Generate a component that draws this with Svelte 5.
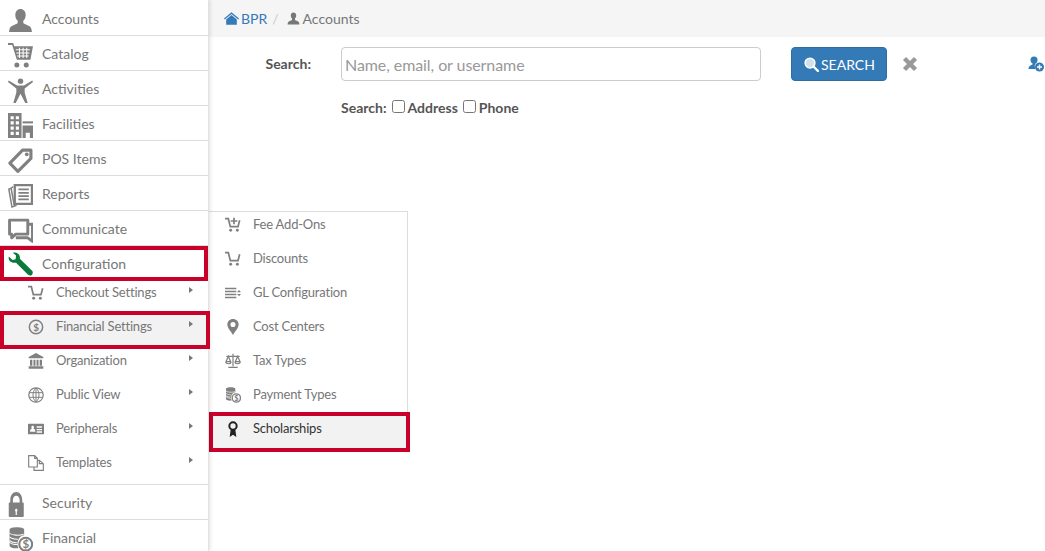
<script lang="ts">
    const mainTop = [
        { label: "Accounts", icon: "person" },
        { label: "Catalog", icon: "cart" },
        { label: "Activities", icon: "activity" },
        { label: "Facilities", icon: "building" },
        { label: "POS Items", icon: "tag" },
        { label: "Reports", icon: "reports" },
        { label: "Communicate", icon: "chat" },
    ];
    const subItems = [
        { label: "Checkout Settings", icon: "cartline" },
        { label: "Financial Settings", icon: "dollar", marked: true },
        { label: "Organization", icon: "bank" },
        { label: "Public View", icon: "globe" },
        { label: "Peripherals", icon: "idcard" },
        { label: "Templates", icon: "files" },
    ];
    const flyout = [
        { label: "Fee Add-Ons", icon: "cartplus" },
        { label: "Discounts", icon: "cartline" },
        { label: "GL Configuration", icon: "list" },
        { label: "Cost Centers", icon: "pin" },
        { label: "Tax Types", icon: "scale" },
        { label: "Payment Types", icon: "coins" },
        { label: "Scholarships", icon: "ribbon", marked: true },
    ];
</script>

{#snippet icon(name)}
    <svg viewBox="0 0 24 24" class="ico" aria-hidden="true">
        {#if name === "person"}
            <path d="M12 1c3 0 5 2.400 5 5.600 0 2.400-1 4.400-2.300 5.600v2c0 1 3.500 2 6 3.400 1.300.8 2 2.600 2.300 5.400H1c.3-2.800 1-4.600 2.300-5.400 2.500-1.400 6-2.400 6-3.400v-2C8 11 7 9 7 6.600 7 3.400 9 1 12 1z" />
        {:else if name === "cart"}
            <path d="M0 0h5l1 3h18l-2.500 13H8.500L4 2H0z" />
            <path class="cut" d="M7.500 6.500h13.500M8 9.500h12.500M8.800 12.500h11M11 4.500v10M14.500 4.500v10M18 4.500v10" />
            <circle cx="8.500" cy="21" r="2.400" /><circle cx="17.500" cy="21" r="2.400" />
        {:else if name === "activity"}
            <circle cx="12" cy="3" r="2.600" />
            <path d="M.7 2.500l8 4.600h6.600l8-4.600.7 1.300-8 6.200v4l3 10.500h-2.200L12 15l-4.800 9.500H5l3-10.500v-4L0 3.800z" />
        {:else if name === "building"}
            <path fill-rule="evenodd" d="M0 0h13v25H0zM2.500 3v3h3V3zm5 0v3h3V3zm-5 5v3h3V8zm5 0v3h3V8zm-5 5v3h3v-3zm5 0v3h3v-3zm-5 5v3h3v-3zm5 0v3h3v-3z" />
            <path d="M14 8h10v2H14z" />
            <path d="M14 12h10v13h-3v-6h-4v6h-3z" />
        {:else if name === "tag"}
            <path fill="none" stroke-width="3" stroke-linejoin="round" class="line" d="M14 2h8v8L9.500 22.500 1.800 14.500z" />
            <circle cx="18" cy="6" r="1.800" />
        {:else if name === "reports"}
            <path fill="none" class="line" stroke-width="1.400" d="M3 5L.8 6l3 17 4.500-1.500M5 3.500L3 5l3 16.500" />
            <path fill="none" class="line" stroke-width="2.200" d="M6.500 2h16.500v18H6.500z" />
            <path class="line" stroke-width="1.700" d="M10 6.200h10M10 9.400h10M10 12.600h10M10 15.800h10" />
        {:else if name === "chat"}
            <path fill="none" class="line" stroke-width="2.800" stroke-linejoin="round" d="M1.500 2h17.500v13.500H7.500L3.500 19v-3.500h-2z" />
            <path fill="none" class="line" stroke-width="2.800" stroke-linejoin="round" d="M19 6h4.500v16.500l-4.500-3.500H7.500" />
        {:else if name === "cartline"}
            <path fill="none" class="line" stroke-width="2.600" d="M0 2.500h5l3 12h11.500L22 5" />
            <circle cx="8.500" cy="20" r="2.200" /><circle cx="18.500" cy="20" r="2.200" />
        {:else if name === "cartplus"}
            <path fill="none" class="line" stroke-width="2.600" d="M0 2.500h5l3 12h11.500L22 5" />
            <path class="line" stroke-width="2.600" d="M13.500 1v10M8.500 6h10" />
            <circle cx="8.500" cy="20" r="2.200" /><circle cx="18.500" cy="20" r="2.200" />
        {:else if name === "dollar"}
            <circle cx="12" cy="12" r="10" fill="none" class="line" stroke-width="2.200" />
            <text x="12" y="17.500" text-anchor="middle" class="glyph">$</text>
        {:else if name === "bank"}
            <path d="M12 0l11 6v2H1V6zM3 10h3.500v9H3zm5.200 0h3v9h-3zm4.600 0h3v9h-3zm4.700 0H21v9h-3.500zM1 20h22v3.500H1z" />
        {:else if name === "globe"}
            <circle cx="12" cy="12" r="10.800" fill="none" class="line" stroke-width="1.800" />
            <path fill="none" class="line" stroke-width="1.500" d="M2 8.500h20M2 15.500h20M12 1.500v21M12 1.500c-6 5-6 16 0 21M12 1.500c6 5 6 16 0 21" />
        {:else if name === "idcard"}
            <path fill-rule="evenodd" d="M1 4h22c.600 0 1 .400 1 1v14c0 .600-.400 1-1 1H1c-.600 0-1-.400-1-1V5c0-.600.400-1 1-1zm6 3c-1.400 0-2 1-2 2.400 0 1 .400 1.800 1 2.200-2 .600-3 1.400-3 4.400h8c0-3-1-3.800-3-4.400.600-.400 1-1.200 1-2.200C9 8 8.400 7 7 7zm6 1v2h8V8zm0 4v2h8v-2zm0 3.500v2h8v-2z" />
        {:else if name === "files"}
            <path fill="none" class="line" stroke-width="1.700" d="M1 1h9l4 4v13H1zM10 1v4h4M14 8h3l6 5v10H9v-5M17 8v5h6" />
        {:else if name === "list"}
            <path d="M0 4h17v2.400H0zm0 4.500h17v2.400H0zM0 13h17v2.400H0zm0 4.500h17v2.400H0zM21 7.500l3 3.500h-6zm0 9.500l-3-3.500h6z" />
        {:else if name === "pin"}
            <path fill-rule="evenodd" d="M12 0c4.800 0 8.500 3.500 8.500 8.400C20.500 13.500 15 19 12 24 9 19 3.500 13.500 3.500 8.400 3.500 3.500 7.200 0 12 0zm0 4.500a3.800 3.800 0 100 7.600 3.800 3.800 0 000-7.600z" />
        {:else if name === "scale"}
            <path fill="none" class="line" stroke-width="1.800" d="M12 1v19M5 21.500h14M2 5h20M5 5l-3.500 8h7zM19 5l-3.500 8h7zM.8 13.500c1 3.500 7.400 3.500 8.400 0M14.800 13.500c1 3.500 7.400 3.500 8.400 0" />
        {:else if name === "coins"}
            <path class="solid" d="M1.500 2.500c0-3 14-3 14 0v5.500c-3.500.5-6 3-6.500 8.500-3.500 0-7.500-1-7.500-3z" />
            <path class="line cutline" fill="none" stroke-width="1.300" d="M1.500 6c2 2 9 2.500 13.500 1M1.500 9.500c2 2 5 2.300 8 2.200M1.500 13c2 1.800 4.500 2.100 7 2.100M1.500 16.500c2 2 4.500 2.300 7 2.300" />
            <path class="solid" d="M1.500 15c2 2 5 2.300 7.500 2.300l1 3c-3 .5-8.500-.3-8.500-2.300z" />
            <circle cx="17" cy="16.500" r="6.200" fill="#fff" class="line" stroke-width="2" />
            <text x="17" y="20.500" text-anchor="middle" class="glyph small">$</text>
        {:else if name === "ribbon"}
            <path d="M8.500 13h7l1.500 11-5-3.500L7 24z" />
            <circle cx="12" cy="7.500" r="5.500" fill="none" class="line" stroke-width="3" />
        {/if}
    </svg>
{/snippet}

<div class="page">
    <nav class="sidebar">
        {#each mainTop as item}
            <div class="nav-item">{@render icon(item.icon)}<span>{item.label}</span></div>
        {/each}
        <div class="nav-item active marked">
            <svg viewBox="0 0 28 28" class="ico wrench" aria-hidden="true">
                <path d="M1 5l4 4 3.500-1L9 4 5.500.8c4-1.500 8.500 1.700 7.800 6.700L27 21c1 1 1 3 0 4.500-1.500 1.500-3.500 1-4.500 0L9 12C4 13-.500 9.500 1 5z" />
            </svg>
            <span>Configuration</span>
        </div>
        <div class="sub-list">
            {#each subItems as item}
                <div class="sub-item" class:marked={item.marked}>
                    <span class="sub-icon">{@render icon(item.icon)}</span>
                    <span class="sub-label">{item.label}</span>
                    <i class="caret"></i>
                </div>
            {/each}
        </div>
        <div class="nav-item">
            <svg viewBox="0 0 24 24" class="ico" aria-hidden="true">
                <g transform="scale(.72 1)">
                    <path fill-rule="evenodd" d="M3 10V8c0-5 3.500-8 8-8s8 3 8 8v2h1c.600 0 1 .400 1 1v12c0 .600-.400 1-1 1H2c-.600 0-1-.400-1-1V11c0-.600.400-1 1-1zm3.500-2v2h9V8c0-3-1.800-4.500-4.500-4.500S6.500 5 6.500 8zm4.500 8c-1 0-1.600.700-1.600 1.600 0 .600.300 1 .800 1.300V22h1.600v-3.100c.500-.300.800-.700.800-1.300 0-.900-.600-1.600-1.600-1.600z" />
                </g>
            </svg>
            <span>Security</span>
        </div>
        <div class="nav-item">{@render icon("coins")}<span>Financial</span></div>
    </nav>

    <div class="flyout">
        {#each flyout as item}
            <div class="fly-item" class:marked={item.marked}>
                <span class="sub-icon">{@render icon(item.icon)}</span>
                <span>{item.label}</span>
            </div>
        {/each}
    </div>

    <main class="content">
        <div class="breadcrumb">
            <svg viewBox="0 0 24 20" class="crumb-home" aria-hidden="true">
                <path d="M12 0l12 10-1.200 1.400L12 2.600 1.200 11.400 0 10z" />
                <path d="M12 4.500l8.500 7V20h-17v-8.500z" />
            </svg>
            <a href="#top">BPR</a>
            <span class="slash">/</span>
            <svg viewBox="0 0 24 24" class="crumb-user" aria-hidden="true">
                <path d="M12 1c3 0 5 2.400 5 5.600 0 2.400-1 4.400-2.300 5.600v2c0 1 3.500 2 6 3.400 1.300.8 2 2.600 2.300 5.400H1c.3-2.800 1-4.600 2.300-5.400 2.500-1.400 6-2.400 6-3.400v-2C8 11 7 9 7 6.600 7 3.400 9 1 12 1z" />
            </svg>
            <span>Accounts</span>
        </div>

        <div class="search-row">
            <label class="search-label" for="q">Search:</label>
            <input id="q" type="text" placeholder="Name, email, or username" />
            <button class="search-btn" type="button">
                <svg viewBox="0 0 20 20" aria-hidden="true">
                    <circle cx="8" cy="8" r="6.500" fill="#cfe0ef" stroke="#fff" stroke-width="2" />
                    <path d="M13 13l5.500 5.500" stroke="#fff" stroke-width="3" stroke-linecap="round" />
                </svg>
                SEARCH
            </button>
            <svg viewBox="0 0 16 16" class="clear" aria-hidden="true">
                <path d="M2.500 2.500l11 11M13.500 2.500l-11 11" stroke="#999" stroke-width="4.400" />
            </svg>
            <svg viewBox="0 0 16 16" class="add-user" aria-hidden="true">
                <circle cx="6" cy="4" r="3.500" />
                <path d="M4.500 7h3v1.500C6 9 7 10 7.500 13H.5c0-3 2-3.500 4-4.500z" />
                <circle cx="11.500" cy="11" r="4.500" />
                <path d="M9 10.300h5v1.400H9zM10.800 8.500h1.400v5h-1.400z" fill="#fff" />
            </svg>
        </div>

        <div class="options">
            <span>Search:</span>
            <label><input type="checkbox" />Address</label>
            <label><input type="checkbox" />Phone</label>
        </div>
    </main>
</div>

<style>
    :global(body) {
        margin: 0;
        background: #fff;
        font-family: Lato, "Open Sans", sans-serif;
        overflow: hidden;
    }

    .page {
        position: relative;
        display: flex;
        width: 1045px;
        height: 551px;
        overflow: hidden;
        color: #777;
    }

    .sidebar {
        position: relative;
        flex: none;
        width: 208px;
        padding-top: 1px;
        border-right: 1px solid #e2e2e2;
        box-shadow: 1px 0 4px rgba(0, 0, 0, 0.12);
        background: #fff;
        z-index: 1;
    }

    .ico {
        display: block;
        width: 25px;
        height: 25px;
        flex: none;
        fill: #808080;
    }

    .ico :global(.line) {
        stroke: #808080;
    }

    .ico :global(.cut),
    .ico :global(.cutline) {
        stroke: #fff;
        stroke-width: 1;
        fill: none;
    }

    .ico :global(.glyph) {
        font: bold 15px Lato, sans-serif;
        fill: #808080;
    }

    .ico :global(.glyph.small) {
        font-size: 11px;
    }

    .nav-item {
        display: flex;
        align-items: center;
        gap: 9px;
        box-sizing: border-box;
        height: 35px;
        padding-left: 8px;
        border-bottom: 1px solid #ddd;
        font-size: 14px;
        color: #777;
    }

    .nav-item > .ico {
        margin-top: 4px;
    }

    .active .wrench {
        fill: #0a7a3c;
        margin-top: 2px;
    }

    .marked {
        position: relative;
        isolation: isolate;
    }

    .marked::after {
        content: "";
        position: absolute;
        z-index: -1;
        border: 4px solid #c8002a;
        pointer-events: none;
    }

    .nav-item.marked::after {
        inset: 0 0 -1px 0;
    }

    .sub-list {
        margin-top: -6px;
        padding-bottom: 5px;
        border-bottom: 1px solid #ddd;
    }

    .sub-item {
        display: flex;
        align-items: center;
        height: 34px;
        padding-left: 28px;
        font-size: 13px;
        letter-spacing: -0.2px;
        color: #777;
    }

    .sub-item.marked::after {
        inset: 2px -2px -6px 0;
        background: #f2f2f2;
    }

    .sub-icon {
        flex: none;
        width: 28px;
    }

    .sub-icon .ico {
        width: 16px;
        height: 16px;
        margin-top: 2px;
    }

    .sub-label {
        flex: 1;
    }

    .caret {
        width: 0;
        height: 0;
        margin: -4px 15px 0 0;
        border-left: 4px solid #777;
        border-top: 3.500px solid transparent;
        border-bottom: 3.500px solid transparent;
    }

    .flyout {
        position: absolute;
        left: 208px;
        top: 211px;
        width: 200px;
        height: 240px;
        box-sizing: border-box;
        border: 1px solid #ddd;
        background: #fff;
        z-index: 0;
    }

    .fly-item {
        display: flex;
        align-items: center;
        height: 34px;
        padding-left: 16px;
        font-size: 13px;
        letter-spacing: -0.2px;
        color: #777;
    }

    .fly-item:first-child {
        margin-top: -5px;
    }

    .fly-item.marked {
        color: #333;
    }

    .fly-item.marked .ico {
        fill: #222;
    }

    .fly-item.marked .ico :global(.line) {
        stroke: #222;
    }

    .fly-item.marked::after {
        inset: 1px -3px -7px 0;
        background: #f2f2f2;
    }

    .content {
        flex: 1;
        min-width: 0;
    }

    .breadcrumb {
        display: flex;
        align-items: center;
        height: 37px;
        padding-left: 15px;
        background: #f5f5f5;
        font-size: 14px;
        color: #777;
    }

    .breadcrumb a {
        color: #337ab7;
        text-decoration: none;
    }

    .crumb-home {
        width: 15px;
        height: 13px;
        margin-right: 2px;
        fill: #337ab7;
    }

    .crumb-user {
        width: 13px;
        height: 13px;
        margin-right: 3px;
        fill: #777;
    }

    .slash {
        margin: 0 8px 0 5px;
        color: #ccc;
    }

    .search-row {
        display: flex;
        align-items: center;
        height: 34px;
        margin-top: 10px;
    }

    .search-label {
        width: 102px;
        text-align: right;
        margin: -2px 30px 0 0;
        font-size: 14px;
        font-weight: 700;
        color: #555;
    }

    #q {
        box-sizing: border-box;
        width: 420px;
        height: 34px;
        padding: 0 3px;
        border: 1px solid #ccc;
        border-radius: 4px;
        font: 16px Lato, sans-serif;
        letter-spacing: -0.08px;
        outline: none;
    }

    #q::placeholder {
        color: #999;
        opacity: 1;
    }

    .search-btn {
        display: flex;
        align-items: center;
        gap: 2px;
        box-sizing: border-box;
        width: 96px;
        height: 34px;
        margin-left: 30px;
        padding: 0 0 0 12px;
        border: 1px solid #2e6da4;
        border-radius: 4px;
        background: #337ab7;
        color: #fff;
        font: 14px Lato, sans-serif;
    }

    .search-btn svg {
        width: 15px;
        height: 15px;
    }

    .clear {
        width: 16px;
        height: 16px;
        margin-left: 15px;
    }

    .add-user {
        width: 16px;
        height: 16px;
        margin-left: 110px;
        fill: #337ab7;
    }

    .options {
        display: flex;
        align-items: center;
        gap: 5px;
        margin: 18px 0 0 132px;
        font-size: 14px;
        font-weight: 700;
        color: #555;
    }

    .options label {
        display: flex;
        align-items: center;
    }

    .options input {
        width: 13px;
        height: 13px;
        margin: 0 3px 2px 0;
    }
</style>
